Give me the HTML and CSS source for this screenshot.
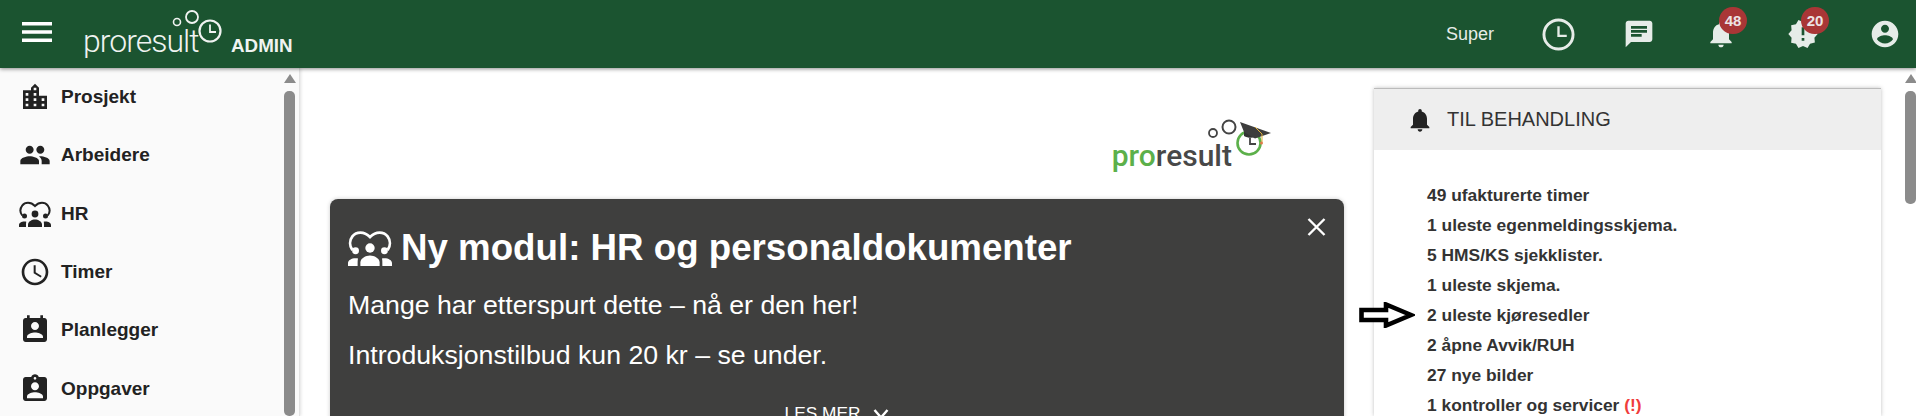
FILE: index.html
```html
<!DOCTYPE html>
<html lang="en">
<head>
    <meta charset="UTF-8">
    <meta name="viewport" content="width=device-width, initial-scale=1.0">
    <title>Proresult Admin</title>
    <link rel="stylesheet" href="styles.css">
</head>
<body>
    <svg class="defs" width="0" height="0">
        <symbol id="icon-hr" viewBox="0 0 32 26">
            <path d="M3.2 14.5C1 11.5 1 7.5 3.2 4.6 6 1 11.6 .6 16 5 20.400 .6 26 1 28.800 4.600 31 7.500 31 11.500 28.800 14.500" fill="none" stroke="currentColor" stroke-width="2"/>
            <circle cx="16" cy="13" r="3.400"/>
            <circle cx="5.500" cy="15" r="2.500"/>
            <circle cx="26.500" cy="15" r="2.500"/>
            <path d="M9 26v-2.500c0-3 4-5 7-5s7 2 7 5V26z"/>
            <path d="M0 26v-2c0-2 2.500-3.500 5.500-3.500 .8 0 1.300 .1 1.800 .2C7 21.800 7 23 7 26z"/>
            <path d="M32 26v-2c0-2-2.500-3.500-5.500-3.500-.8 0-1.300 .1-1.800 .2C25 21.800 25 23 25 26z"/>
        </symbol>
    </svg>

    <div class="app">
        <header class="topbar">
            <div class="brand">
                <svg class="menu-icon" viewBox="0 0 30 20"><path d="M0 0h30v3.400H0zM0 8.300h30v3.400H0zM0 16.600h30V20H0z"/></svg>
                <span class="logo-text">proresult</span>
                <svg class="logo-mark" viewBox="0 0 50 44" fill="none" stroke="currentColor">
                    <circle cx="5" cy="16" r="3.500" stroke-width="1.600"/>
                    <circle cx="20" cy="11" r="6" stroke-width="1.800"/>
                    <circle cx="38" cy="25" r="10.500" stroke-width="2.200"/>
                    <path d="M38 18.500V26h6" stroke-width="1.800"/>
                </svg>
                <span class="admin">ADMIN</span>
            </div>
            <nav class="top-actions">
                <span class="user">Super</span>
                <svg class="clock-icon" viewBox="0 0 34 34" fill="none" stroke="currentColor">
                    <circle cx="17" cy="17" r="15" stroke-width="3"/>
                    <path d="M17 8.500V18.500h8.500" stroke-width="2.400"/>
                </svg>
                <svg class="top-icon" viewBox="0 0 24 24"><path d="M20 2H4c-1.100 0-1.990.9-1.990 2L2 22l4-4h14c1.100 0 2-.9 2-2V4c0-1.100-.9-2-2-2zM6 9h12v2H6V9zm8 5H6v-2h8v2zm4-6H6V6h12v2z"/></svg>
                <div class="badge-wrap">
                    <svg class="top-icon" viewBox="0 0 24 24"><path d="M12 22c1.100 0 2-.9 2-2h-4c0 1.100.89 2 2 2zm6-6v-5c0-3.070-1.640-5.640-4.500-6.320V4c0-.83-.67-1.500-1.500-1.500s-1.500.67-1.500 1.500v.68C7.630 5.360 6 7.920 6 11v5l-2 2v1h16v-1l-2-2z"/></svg>
                    <span class="badge">48</span>
                </div>
                <div class="badge-wrap">
                    <svg class="top-icon" viewBox="0 0 24 24"><path d="M23 12l-2.440-2.780.34-3.680-3.610-.82-1.890-3.180L12 3 8.600 1.540 6.710 4.720l-3.610.81.34 3.680L1 12l2.440 2.780-.34 3.690 3.610.82 1.890 3.180L12 21l3.400 1.460 1.890-3.180 3.610-.82-.34-3.680L23 12zm-10 5h-2v-2h2v2zm0-4h-2V7h2v6z"/></svg>
                    <span class="badge">20</span>
                </div>
                <svg class="top-icon" viewBox="0 0 24 24"><path d="M12 2C6.480 2 2 6.480 2 12s4.480 10 10 10 10-4.480 10-10S17.520 2 12 2zm0 3c1.660 0 3 1.340 3 3s-1.340 3-3 3-3-1.340-3-3 1.340-3 3-3zm0 14.200c-2.500 0-4.710-1.280-6-3.220.03-1.990 4-3.080 6-3.080 1.990 0 5.970 1.090 6 3.080-1.290 1.940-3.500 3.220-6 3.220z"/></svg>
            </nav>
        </header>

        <div class="layout">
            <aside class="sidebar">
                <ul class="side-menu">
                    <li class="side-item">
                        <svg class="side-icon" viewBox="0 0 24 24"><path d="M15 11V5l-3-3-3 3v2H3v14h18V11h-6zm-8 8H5v-2h2v2zm0-4H5v-2h2v2zm0-4H5V9h2v2zm6 8h-2v-2h2v2zm0-4h-2v-2h2v2zm0-4h-2V9h2v2zm0-4h-2V5h2v2zm6 12h-2v-2h2v2zm0-4h-2v-2h2v2z"/></svg>
                        <span>Prosjekt</span>
                    </li>
                    <li class="side-item">
                        <svg class="side-icon" viewBox="0 0 24 24"><path d="M16 11c1.660 0 2.990-1.340 2.990-3S17.660 5 16 5c-1.660 0-3 1.340-3 3s1.340 3 3 3zm-8 0c1.660 0 2.990-1.340 2.990-3S9.660 5 8 5C6.340 5 5 6.340 5 8s1.340 3 3 3zm0 2c-2.330 0-7 1.170-7 3.500V19h14v-2.500c0-2.330-4.670-3.500-7-3.500zm8 0c-.29 0-.62.02-.97.05 1.160.84 1.970 1.970 1.970 3.450V19h6v-2.500c0-2.330-4.670-3.500-7-3.500z"/></svg>
                        <span>Arbeidere</span>
                    </li>
                    <li class="side-item">
                        <svg class="side-icon side-icon-hr"><use href="#icon-hr"/></svg>
                        <span>HR</span>
                    </li>
                    <li class="side-item">
                        <svg class="side-icon" viewBox="0 0 24 24"><path d="M11.990 2C6.470 2 2 6.480 2 12s4.470 10 9.990 10C17.520 22 22 17.520 22 12S17.520 2 11.990 2zM12 20c-4.420 0-8-3.580-8-8s3.580-8 8-8 8 3.580 8 8-3.580 8-8 8zm.5-13H11v6l5.250 3.150.75-1.230-4.500-2.670z"/></svg>
                        <span>Timer</span>
                    </li>
                    <li class="side-item">
                        <svg class="side-icon" viewBox="0 0 24 24"><path d="M19 3h-1V1h-2v2H8V1H6v2H5c-1.110 0-2 .9-2 2v14c0 1.100.89 2 2 2h14c1.100 0 2-.9 2-2V5c0-1.100-.9-2-2-2zm-7 3c1.660 0 3 1.340 3 3s-1.340 3-3 3-3-1.340-3-3 1.340-3 3-3zm6 12H6v-1c0-2 4-3.100 6-3.100s6 1.100 6 3.100v1z"/></svg>
                        <span>Planlegger</span>
                    </li>
                    <li class="side-item">
                        <svg class="side-icon" viewBox="0 0 24 24"><path d="M19 3h-4.180C14.400 1.840 13.300 1 12 1c-1.300 0-2.400.84-2.820 2H5c-1.100 0-2 .9-2 2v14c0 1.100.9 2 2 2h14c1.100 0 2-.9 2-2V5c0-1.100-.9-2-2-2zm-7 0c.55 0 1 .45 1 1s-.45 1-1 1-1-.45-1-1 .45-1 1-1zm0 4c1.660 0 3 1.340 3 3s-1.340 3-3 3-3-1.340-3-3 1.340-3 3-3zm6 12H6v-1.400c0-2 4-3.100 6-3.100s6 1.100 6 3.100V19z"/></svg>
                        <span>Oppgaver</span>
                    </li>
                </ul>
                <div class="scrollbar">
                    <span class="scroll-arrow"></span>
                    <span class="scroll-thumb scroll-thumb-long"></span>
                </div>
            </aside>

            <main class="content">
                <section class="news">
                    <div class="brand-logo">
                        <span class="brand-text"><span class="brand-pro">pro</span>result</span>
                        <svg class="brand-mark" viewBox="0 0 70 44" fill="none">
                            <circle cx="8" cy="15" r="4" stroke="#444" stroke-width="1.800"/>
                            <circle cx="24" cy="9" r="6.500" stroke="#444" stroke-width="2"/>
                            <circle cx="44" cy="25" r="11.500" stroke="#5cb04a" stroke-width="2.600"/>
                            <path d="M39 10v8c4 2.500 11 2.500 16-1V14z" fill="#333"/>
                            <path d="M45 20v6h6" stroke="#444" stroke-width="1.800"/>
                            <path d="M35 4l31 11-16 5.500L39 14z" fill="#3d3d3d"/>
                            <path d="M50 9l7 7v8" stroke="#e0b13c" stroke-width="1"/>
                            <circle cx="56.500" cy="25" r="1.500" fill="#e07a4a"/>
                        </svg>
                    </div>
                    <div class="banner">
                        <svg class="banner-close" viewBox="0 0 19 18" fill="none" stroke="#fff"><path d="M1.500 1l16 16M17.500 1l-16 16" stroke-width="2.400"/></svg>
                        <h1 class="banner-title">
                            <svg class="banner-icon"><use href="#icon-hr"/></svg>
                            Ny modul: HR og personaldokumenter
                        </h1>
                        <p class="banner-text">Mange har etterspurt dette – nå er den her!</p>
                        <p class="banner-text">Introduksjonstilbud kun 20 kr – se under.</p>
                        <div class="banner-more">
                            LES MER
                            <svg class="more-icon" viewBox="0 0 16 10" fill="none" stroke="currentColor"><path d="M1.500 1l6.500 7.500L14.500 1" stroke-width="2.400"/></svg>
                        </div>
                    </div>
                </section>

                <section class="panel">
                    <div class="panel-head">
                        <svg class="panel-icon" viewBox="0 0 24 24"><path d="M12 22c1.100 0 2-.9 2-2h-4c0 1.100.89 2 2 2zm6-6v-5c0-3.070-1.640-5.640-4.500-6.320V4c0-.83-.67-1.500-1.500-1.500s-1.500.67-1.500 1.500v.68C7.630 5.360 6 7.920 6 11v5l-2 2v1h16v-1l-2-2z"/></svg>
                        <span>TIL BEHANDLING</span>
                    </div>
                    <ul class="todo">
                        <li>49 ufakturerte timer</li>
                        <li>1 uleste egenmeldingsskjema.</li>
                        <li>5 HMS/KS sjekklister.</li>
                        <li>1 uleste skjema.</li>
                        <li class="todo-marked">
                            <svg class="arrow" viewBox="0 0 56 26" fill="#fff" stroke="#000"><path d="M2.500 8H27V2.500L52 13 27 23.500V18H2.500z" stroke-width="4.600"/></svg>
                            2 uleste kjøresedler
                        </li>
                        <li>2 åpne Avvik/RUH</li>
                        <li>27 nye bilder</li>
                        <li>1 kontroller og servicer <span class="warn">(!)</span></li>
                    </ul>
                </section>

                <div class="scrollbar scrollbar-main">
                    <span class="scroll-arrow"></span>
                    <span class="scroll-thumb"></span>
                </div>
            </main>
        </div>
    </div>
</body>
</html>
```

FILE: styles.css
```css
* {
    box-sizing: border-box;
}

html, body {
    margin: 0;
    padding: 0;
    height: 100%;
    overflow: hidden;
    background-color: #fff;
    font-family: "Liberation Sans", Arial, sans-serif;
}

.defs {
    display: block;
    height: 0;
}

.app {
    height: 416px;
    overflow: hidden;
    display: flex;
    flex-direction: column;
}

/* Top bar */
.topbar {
    flex: none;
    height: 68px;
    background-color: #1b5430;
    color: #e6ece8;
    display: flex;
    justify-content: space-between;
    align-items: center;
    position: relative;
    z-index: 2;
    box-shadow: 0 1px 4px rgba(0, 0, 0, 0.45);
}

.brand {
    display: flex;
    align-items: flex-start;
    padding-left: 22px;
    height: 100%;
    color: #f0f3f1;
}

.menu-icon {
    width: 30px;
    height: 20px;
    fill: #fff;
    margin-top: 22px;
}

.logo-text {
    font-family: Roboto, sans-serif;
    font-weight: 300;
    font-size: 32px;
    line-height: 36px;
    letter-spacing: -1px;
    margin: 23px 0 0 31px;
    width: 115px;
}

.logo-mark {
    width: 50px;
    height: 44px;
    margin: 6px 0 0 -26px;
}

.admin {
    font-weight: bold;
    font-size: 18.800px;
    line-height: 20px;
    margin: 36px 0 0 9px;
}

.top-actions {
    display: flex;
    align-items: center;
    padding-right: 15px;
    height: 100%;
}

.user {
    font-size: 18px;
    margin-right: 48px;
}

.clock-icon {
    width: 33px;
    height: 33px;
    margin-right: 48px;
}

.top-icon {
    width: 32px;
    height: 32px;
    fill: currentColor;
    display: block;
}

.top-actions > .top-icon {
    margin-right: 50px;
}

.top-actions > .top-icon:last-child {
    margin-right: 0;
}

.badge-wrap {
    position: relative;
    margin-right: 50px;
}

.badge {
    position: absolute;
    top: -11px;
    left: 14px;
    min-width: 28px;
    height: 27px;
    padding: 0 4px;
    border-radius: 14px;
    background-color: #a93636;
    color: #ece4e4;
    font-weight: bold;
    font-size: 15px;
    line-height: 27px;
    text-align: center;
}

/* Page below the bar */
.layout {
    flex: 1;
    min-height: 0;
    display: flex;
}

.sidebar {
    flex: none;
    width: 300px;
    background-color: #fafafa;
    border-right: 1px solid #e2e2e2;
    box-shadow: 1px 0 3px rgba(0, 0, 0, 0.12);
    display: flex;
    justify-content: space-between;
}

.side-menu {
    list-style: none;
    margin: 0;
    padding: 0 0 0 19px;
}

.side-item {
    height: 58.300px;
    display: flex;
    align-items: center;
    gap: 10px;
    font-weight: bold;
    font-size: 19px;
    color: #222;
}

.side-icon {
    width: 32px;
    height: 32px;
    fill: #222;
    color: #222;
    flex: none;
}

.side-icon-hr {
    width: 32px;
    height: 26px;
}

.scrollbar {
    flex: none;
    width: 11px;
    margin-right: 4px;
    display: flex;
    flex-direction: column;
    align-items: center;
    padding-top: 6px;
}

.scroll-arrow {
    width: 0;
    height: 0;
    border-left: 6px solid transparent;
    border-right: 6px solid transparent;
    border-bottom: 9px solid #8b8b8b;
    margin-bottom: 8px;
}

.scroll-thumb {
    width: 11px;
    height: 113px;
    border-radius: 5px;
    background-color: #8b8b8b;
}

.scroll-thumb-long {
    height: 400px;
}

.content {
    flex: 1;
    min-width: 0;
    display: flex;
}

.news {
    flex: none;
    width: 1044px;
    padding: 0 0 0 30px;
}

.brand-logo {
    height: 131px;
    display: flex;
    justify-content: flex-end;
    align-items: flex-start;
    padding-right: 69px;
}

.brand-text {
    font-family: Roboto, sans-serif;
    font-weight: 500;
    font-size: 30px;
    line-height: 34px;
    margin-top: 71px;
    color: #484848;
}

.brand-pro {
    color: #5cb04a;
}

.brand-mark {
    width: 70px;
    height: 44px;
    margin: 50px 0 0 -27px;
}

/* Dark notice */
.banner {
    position: relative;
    width: 1014px;
    height: 300px;
    padding: 27px 18px;
    border-radius: 8px;
    background-color: #3f3f3e;
    color: #fff;
    box-shadow: 0 0 4px rgba(0, 0, 0, 0.2);
}

.banner-close {
    position: absolute;
    top: 19px;
    right: 18px;
    width: 19px;
    height: 18px;
}

.banner-title {
    margin: 0 0 19px;
    display: flex;
    align-items: center;
    gap: 9px;
    font-size: 36.700px;
    line-height: 44px;
    font-weight: bold;
}

.banner-icon {
    width: 44px;
    height: 36px;
    fill: #fff;
    color: #fff;
}

.banner-text {
    margin: 0 0 17px;
    font-size: 26.700px;
    line-height: 33px;
}

.banner-more {
    display: flex;
    justify-content: center;
    align-items: center;
    gap: 13px;
    margin-top: 31px;
    font-size: 17.300px;
}

.more-icon {
    width: 16px;
    height: 10px;
}

/* Todo card */
.panel {
    flex: none;
    width: 507px;
    margin: 20px 0 0 30px;
    background-color: #fff;
    border-top: 1px solid #bbb;
    box-shadow: 0 0 4px rgba(0, 0, 0, 0.25);
}

.panel-head {
    height: 61px;
    background-color: #eee;
    display: flex;
    align-items: center;
    gap: 13px;
    padding-left: 32px;
    font-size: 20px;
    color: #333;
}

.panel-icon {
    width: 28px;
    height: 28px;
    fill: #222;
}

.todo {
    list-style: none;
    margin: 0;
    padding: 30px 0 0 53px;
    font-weight: bold;
    font-size: 17.400px;
    line-height: 30px;
    color: #333;
}

.todo-marked {
    position: relative;
}

.arrow {
    position: absolute;
    left: -68px;
    top: 2px;
    width: 56px;
    height: 26px;
}

.warn {
    color: #f03c3c;
}

.scrollbar-main {
    margin-left: auto;
    margin-right: 0;
}
```
